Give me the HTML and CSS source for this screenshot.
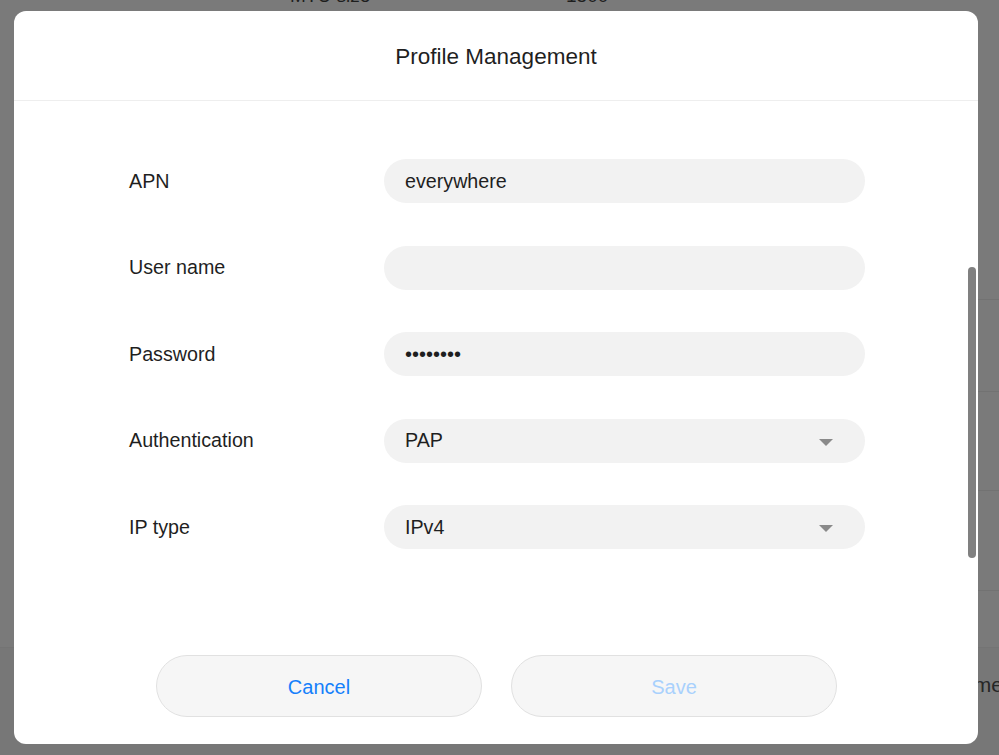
FILE: index.html
```html
<!DOCTYPE html>
<html>
<head>
<meta charset="utf-8">
<link rel="stylesheet" href="styles.css">
</head>
<body>
<div class="page">
  <div class="page-top">
    <span class="bg-cell bg-c1">MTU size</span>
    <span class="bg-cell bg-c2">1500</span>
  </div>
  <div class="bg-row r1"></div>
  <div class="bg-row r2"></div>
  <div class="bg-row r3"></div>
  <div class="bg-fill"></div>
  <div class="bg-footer"><span class="bg-more">me</span></div>
</div>

<div class="modal">
  <div class="modal-header">Profile Management</div>
  <div class="modal-body">
    <div class="form">
      <div class="row">
        <div class="label">APN</div>
        <div class="field">everywhere</div>
      </div>
      <div class="row">
        <div class="label">User name</div>
        <div class="field"></div>
      </div>
      <div class="row">
        <div class="label">Password</div>
        <div class="field pw">••••••••</div>
      </div>
      <div class="row">
        <div class="label">Authentication</div>
        <div class="field select"><span>PAP</span><span class="caret"></span></div>
      </div>
      <div class="row">
        <div class="label">IP type</div>
        <div class="field select"><span>IPv4</span><span class="caret"></span></div>
      </div>
    </div>
    <div class="buttons">
      <div class="btn btn-cancel">Cancel</div>
      <div class="btn btn-save">Save</div>
    </div>
  </div>
  <div class="scrollbar"></div>
</div>
</body>
</html>
```

FILE: styles.css
```css
html, body {
  margin: 0;
  padding: 0;
}
body {
  width: 999px;
  height: 755px;
  overflow: hidden;
  background: #7a7a7a;
  font-family: "Liberation Sans", Arial, sans-serif;
  position: relative;
}
.page {
  display: flex;
  flex-direction: column;
  height: 755px;
}
.page-top {
  flex: 0 0 299px;
  position: relative;
}
.bg-cell {
  position: absolute;
  top: -15px;
  font-size: 19px;
  color: #1e1e1e;
}
.bg-c1 { left: 290px; }
.bg-c2 { left: 566px; }
.bg-row {
  margin-left: 960px;
  border-top: 1px solid #727272;
  box-sizing: border-box;
}
.r1 { flex: 0 0 92px; }
.r2 { flex: 0 0 99px; }
.r3 { flex: 0 0 100px; }
.bg-fill {
  flex: 1;
  margin-left: 960px;
  border-top: 1px solid #727272;
}
.bg-footer {
  flex: 0 0 107px;
  background: #777;
  border-top: 1px solid #747474;
  display: flex;
  justify-content: flex-end;
  align-items: flex-start;
}
.bg-more {
  font-size: 21px;
  color: #262626;
  margin-right: -4px;
  margin-top: 25px;
}

.modal {
  position: absolute;
  left: 14px;
  top: 11px;
  width: 964px;
  height: 733px;
  background: #fff;
  border-radius: 12px;
  display: flex;
  flex-direction: column;
  overflow: hidden;
}
.modal-header {
  height: 90px;
  box-sizing: border-box;
  border-bottom: 1px solid #eeeeee;
  display: flex;
  align-items: center;
  justify-content: center;
  font-size: 22.5px;
  color: #1f1f1f;
  padding-top: 2px;
}
.modal-body {
  flex: 1;
  display: flex;
  flex-direction: column;
}
.form {
  padding: 58px 0 0 115px;
  display: flex;
  flex-direction: column;
  gap: 42.5px;
}
.row {
  display: flex;
  align-items: center;
}
.label {
  width: 255px;
  font-size: 19.7px;
  color: #1f1f1f;
}
.field {
  width: 481px;
  height: 44px;
  box-sizing: border-box;
  border-radius: 22px;
  background: #f2f2f2;
  padding: 0 21px;
  display: flex;
  align-items: center;
  justify-content: space-between;
  font-size: 19.7px;
  color: #1f1f1f;
}
.pw {
  font-size: 20px;
}
.caret {
  width: 0;
  height: 0;
  border-left: 7px solid transparent;
  border-right: 7px solid transparent;
  border-top: 7px solid #8a8a8a;
  margin-right: 11px;
  margin-top: 3px;
}
.buttons {
  display: flex;
  gap: 29px;
  padding: 106px 0 0 142px;
}
.btn {
  width: 326px;
  height: 62px;
  box-sizing: border-box;
  border-radius: 31px;
  background: #f6f6f6;
  border: 1px solid #e1e1e1;
  display: flex;
  align-items: center;
  justify-content: center;
  font-size: 20px;
  padding-top: 2px;
}
.btn-cancel { color: #1580fb; }
.btn-save { color: #a9d1fd; }
.scrollbar {
  position: absolute;
  right: 2px;
  top: 256px;
  width: 8px;
  height: 291px;
  border-radius: 4px;
  background: #808080;
}
```
